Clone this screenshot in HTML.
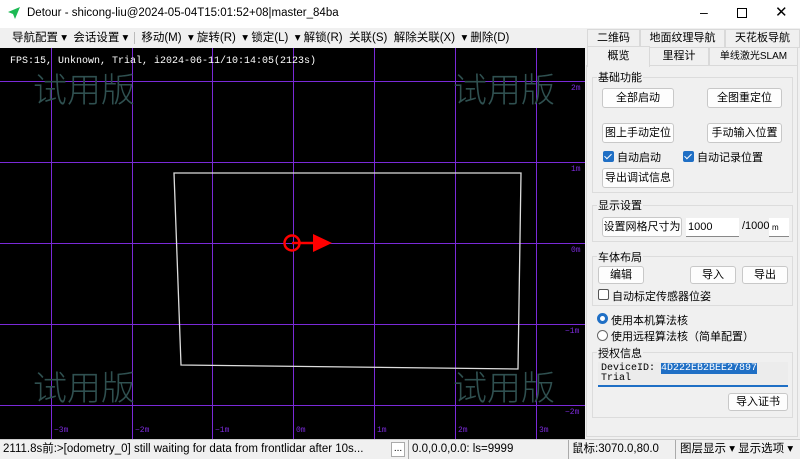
<!DOCTYPE html><html><head><meta charset="utf-8"><style>
*{box-sizing:border-box;margin:0;padding:0}
body{width:800px;height:459px;overflow:hidden;background:#f0f0f0;font-family:"Liberation Sans","Noto Sans CJK SC",sans-serif;font-size:11px;color:#000;position:relative}
.a{position:absolute;white-space:nowrap}
.btn{position:absolute;background:#fdfdfd;border:1px solid #c8c8c8;border-radius:3px;text-align:center;line-height:18px;font-size:11px;white-space:nowrap;overflow:hidden}
.grp{position:absolute;border:1px solid #dcdcdc}
.lbl{position:absolute;background:#f0f0f0;font-size:11px;padding:0 1px;white-space:nowrap}
.tab{position:absolute;border:1px solid #d9d9d9;background:#f0f0f0;text-align:center;font-size:11px;line-height:17px;white-space:nowrap}
.cb{position:absolute;width:11px;height:11px;border-radius:2px;background:#1f6fc5}
.cb::after{content:"";position:absolute;left:3px;top:1px;width:3px;height:6px;border:solid #fff;border-width:0 1.5px 1.5px 0;transform:rotate(45deg)}
.mono{font-family:"Liberation Mono",monospace}
</style></head><body>
<div class="a" style="left:0;top:0;width:800px;height:28px;background:#fff"></div>
<svg class="a" style="left:7px;top:6px" width="14" height="14"><polygon points="13,1 1,6 6,8 8,13" fill="#1db954"/></svg>
<div class="a" style="left:27px;top:7px;font-size:11.5px">Detour - shicong-liu@2024-05-04T15:01:52+08|master_84ba</div>
<div class="a" style="left:700px;top:4px;font-size:14px">&#x2013;</div>
<div class="a" style="left:737px;top:8px;width:10px;height:10px;border:1px solid #000"></div>
<div class="a" style="left:775px;top:3px;font-size:15px">✕</div>
<div class="a" style="left:0;top:28px;width:585px;height:20px;background:#f0f0f0;font-size:11.5px;line-height:20px">
<span style="margin-left:12px">导航配置 ▾ &nbsp;会话设置 ▾</span><span style="border-left:1px solid #bbb;margin-left:6px;padding-left:6px">移动(M) &nbsp;▾ 旋转(R) &nbsp;▾ 锁定(L) &nbsp;▾ 解锁(R) &nbsp;关联(S) &nbsp;解除关联(X) &nbsp;▾ 删除(D)</span></div>
<svg class="a" style="left:0;top:48px" width="585" height="391">
<rect width="585" height="391" fill="#000"/>
<g stroke="#7a2ad8" stroke-width="1">
<line x1="51.5" y1="0" x2="51.5" y2="391"/><line x1="132.5" y1="0" x2="132.5" y2="391"/><line x1="212.5" y1="0" x2="212.5" y2="391"/><line x1="293.5" y1="0" x2="293.5" y2="391"/><line x1="374.5" y1="0" x2="374.5" y2="391"/><line x1="455.5" y1="0" x2="455.5" y2="391"/><line x1="536.5" y1="0" x2="536.5" y2="391"/>
<line x1="0" y1="33.5" x2="585" y2="33.5"/><line x1="0" y1="114.5" x2="585" y2="114.5"/><line x1="0" y1="195.5" x2="585" y2="195.5"/><line x1="0" y1="276.5" x2="585" y2="276.5"/><line x1="0" y1="357.5" x2="585" y2="357.5"/>
</g>
<g fill="#2f5050" font-size="34" font-family="Noto Sans CJK SC,sans-serif" font-weight="300"><text x="33" y="54">试用版</text><text x="453" y="54">试用版</text><text x="33" y="352">试用版</text><text x="453" y="352">试用版</text></g>
<g fill="#7a2ad8" font-size="8" font-family="Liberation Mono,monospace"><text x="54" y="384">−3m</text><text x="135" y="384">−2m</text><text x="215" y="384">−1m</text><text x="296" y="384">0m</text><text x="377" y="384">1m</text><text x="458" y="384">2m</text><text x="539" y="384">3m</text>
<text x="571" y="42">2m</text><text x="571" y="123">1m</text><text x="571" y="204">0m</text><text x="565" y="285">−1m</text><text x="565" y="366">−2m</text></g>
<text x="10" y="15" fill="#fff" font-size="10" font-family="Liberation Mono,monospace">FPS:15, Unknown, Trial, i2024-06-11/10:14:05(2123s)</text>
<polygon points="174,125 521,125 518,321 181,317" fill="none" stroke="#ddd" stroke-width="1.3"/>
<circle cx="292" cy="195" r="7.5" fill="none" stroke="red" stroke-width="2.5"/>
<line x1="292" y1="195" x2="316" y2="195" stroke="red" stroke-width="2.5"/>
<polygon points="313,186 332,195 313,204" fill="red"/>
</svg>
<div class="a" style="left:0;top:439px;width:800px;height:20px;background:#f0f0f0;border-top:1px solid #ccc;font-size:11.5px;line-height:19px">
<span class="a" style="left:3px">2111.8s前:&gt;[odometry_0] still waiting for data from frontlidar after 10s...</span>
<span class="a" style="left:391px;top:2px;width:14px;height:15px;border:1px solid #aaa;background:#fff;line-height:11px;text-align:center;font-size:10px">...</span>
<span class="a" style="left:408px;border-left:1px solid #aaa;padding-left:3px">0.0,0.0,0.0: ls=9999</span>
<span class="a" style="left:568px;border-left:1px solid #aaa;padding-left:3px">鼠标:3070.0,80.0</span>
<span class="a" style="left:675px;border-left:1px solid #aaa;padding-left:4px">图层显示 ▾ 显示选项 ▾</span></div>
<div class="a" style="left:586px;top:65px;width:212px;height:372px;border:1px solid #d9d9d9;background:#f0f0f0"></div>
<div class="tab" style="left:587px;top:29px;width:53px;height:19px">二维码</div>
<div class="tab" style="left:640px;top:29px;width:85px;height:19px">地面纹理导航</div>
<div class="tab" style="left:725px;top:29px;width:75px;height:19px">天花板导航</div>
<div class="tab" style="left:649px;top:47px;width:60px;height:19px">里程计</div>
<div class="tab" style="left:709px;top:47px;width:89px;height:19px;font-size:10px">单线激光SLAM</div>
<div class="tab" style="left:587px;top:46px;width:63px;height:21px;border-bottom:none;line-height:19px">概览</div>
<div class="grp" style="left:592px;top:77px;width:201px;height:116px"></div>
<div class="lbl" style="left:597px;top:69px">基础功能</div>
<div class="btn" style="left:602px;top:88px;width:72px;height:20px">全部启动</div>
<div class="btn" style="left:707px;top:88px;width:75px;height:20px">全图重定位</div>
<div class="btn" style="left:602px;top:123px;width:72px;height:20px">图上手动定位</div>
<div class="btn" style="left:707px;top:123px;width:75px;height:20px">手动输入位置</div>
<div class="cb" style="left:603px;top:151px"></div><div class="a" style="left:617px;top:149px">自动启动</div>
<div class="cb" style="left:683px;top:151px"></div><div class="a" style="left:697px;top:149px">自动记录位置</div>
<div class="btn" style="left:602px;top:168px;width:72px;height:20px">导出调试信息</div>
<div class="grp" style="left:592px;top:205px;width:201px;height:37px"></div>
<div class="lbl" style="left:597px;top:197px">显示设置</div>
<div class="btn" style="left:602px;top:217px;width:80px;height:20px">设置网格尺寸为</div>
<div class="a" style="left:686px;top:218px;width:53px;height:19px;background:#fff;border-bottom:1px solid #888;font-size:11px;padding:3px 2px">1000</div>
<div class="a" style="left:742px;top:220px;font-size:11px">/1000</div>
<div class="a" style="left:769px;top:218px;width:20px;height:19px;background:#fff;border-bottom:1px solid #888;font-size:8px;padding:5px 3px">m</div>
<div class="grp" style="left:592px;top:256px;width:201px;height:50px"></div>
<div class="lbl" style="left:597px;top:249px">车体布局</div>
<div class="btn" style="left:598px;top:266px;width:46px;height:18px;line-height:16px">编辑</div>
<div class="btn" style="left:690px;top:266px;width:46px;height:18px;line-height:16px">导入</div>
<div class="btn" style="left:742px;top:266px;width:46px;height:18px;line-height:16px">导出</div>
<div class="a" style="left:598px;top:289px;width:11px;height:11px;border:1px solid #555;border-radius:2px;background:#fff"></div>
<div class="a" style="left:612px;top:288px">自动标定传感器位姿</div>
<div class="a" style="left:597px;top:313px;width:11px;height:11px;border-radius:50%;border:3px solid #1f6fc5;background:#fff"></div>
<div class="a" style="left:611px;top:312px">使用本机算法核</div>
<div class="a" style="left:597px;top:330px;width:11px;height:11px;border-radius:50%;border:1px solid #666;background:#fff"></div>
<div class="a" style="left:611px;top:328px">使用远程算法核（简单配置）</div>
<div class="grp" style="left:592px;top:352px;width:201px;height:66px"></div>
<div class="lbl" style="left:597px;top:345px">授权信息</div>
<div class="a mono" style="left:598px;top:362px;width:190px;height:25px;background:#ececec;border-bottom:2px solid #1f6fc5;font-size:10px;line-height:10px;padding:2px 3px">DeviceID: <span style="background:#1f6fc5;color:#fff">4D222EB2BEE27897</span><br>Trial</div>
<div class="btn" style="left:728px;top:393px;width:60px;height:18px;line-height:16px">导入证书</div>
</body></html>
